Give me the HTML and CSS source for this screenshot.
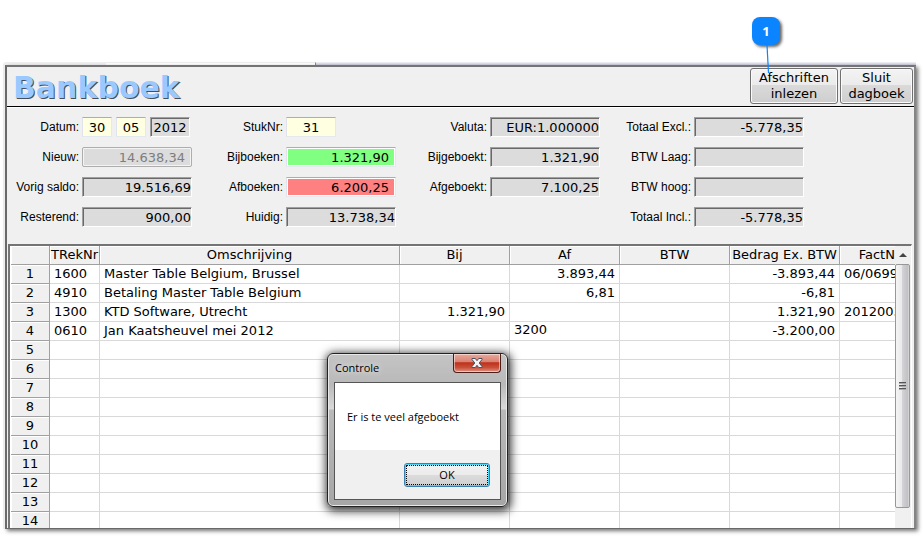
FILE: index.html
```html
<!DOCTYPE html>
<html lang="nl">
<head>
<meta charset="utf-8">
<title>Bankboek</title>
<link rel="stylesheet" href="styles.css">
</head>
<body>
<div class="page">
  <div class="backdrop"><span class="backdrop-tab"></span><span class="backdrop-rest"></span></div>
  <main class="window">
    <header class="titlebar">
      <h1>Bankboek</h1>
      <button class="tool import" type="button">Afschriften inlezen</button>
      <button class="tool close-book" type="button">Sluit dagboek</button>
    </header>

    <form class="summary">
      <div class="group">
        <div class="field">
          <label for="dag">Datum:</label>
          <div class="date">
            <input class="box edit" id="dag" value="30">
            <input class="box edit" aria-label="Maand" value="05">
            <input class="box year" aria-label="Jaar" value="2012" readonly>
          </div>
        </div>
        <div class="field"><label for="nieuw">Nieuw:</label><input class="box off" id="nieuw" value="14.638,34" disabled></div>
        <div class="field"><label for="vorig">Vorig saldo:</label><input class="box" id="vorig" value="19.516,69" readonly></div>
        <div class="field"><label for="rest">Resterend:</label><input class="box" id="rest" value="900,00" readonly></div>
      </div>
      <div class="group">
        <div class="field"><label for="stuk">StukNr:</label><div class="date"><input class="box edit piece" id="stuk" value="31"></div></div>
        <div class="field"><label for="bij">Bijboeken:</label><input class="box credit" id="bij" value="1.321,90"></div>
        <div class="field"><label for="af">Afboeken:</label><input class="box debit" id="af" value="6.200,25"></div>
        <div class="field"><label for="huidig">Huidig:</label><input class="box" id="huidig" value="13.738,34" readonly></div>
      </div>
      <div class="group">
        <div class="field"><label for="valuta">Valuta:</label><input class="box" id="valuta" value="EUR:1.000000" readonly></div>
        <div class="field"><label for="bijg">Bijgeboekt:</label><input class="box" id="bijg" value="1.321,90" readonly></div>
        <div class="field"><label for="afg">Afgeboekt:</label><input class="box" id="afg" value="7.100,25" readonly></div>
      </div>
      <div class="group">
        <div class="field"><label for="excl">Totaal Excl.:</label><input class="box" id="excl" value="-5.778,35" readonly></div>
        <div class="field"><label for="laag">BTW Laag:</label><input class="box" id="laag" value="" readonly></div>
        <div class="field"><label for="hoog">BTW hoog:</label><input class="box" id="hoog" value="" readonly></div>
        <div class="field"><label for="incl">Totaal Incl.:</label><input class="box" id="incl" value="-5.778,35" readonly></div>
      </div>
    </form>

    <section class="ledger">
      <div class="sheet">
        <table>
          <colgroup><col class="c-no"><col class="c-rek"><col><col class="c-amt"><col class="c-amt"><col class="c-amt"><col class="c-amt"><col class="c-fact"></colgroup>
          <thead>
            <tr><th></th><th>TRekNr</th><th>Omschrijving</th><th>Bij</th><th>Af</th><th>BTW</th><th>Bedrag Ex. BTW</th><th>FactNr</th></tr>
          </thead>
          <tbody>
            <tr><th>1</th><td>1600</td><td>Master Table Belgium, Brussel</td><td></td><td class="num">3.893,44</td><td></td><td class="num">-3.893,44</td><td>06/0699</td></tr>
            <tr><th>2</th><td>4910</td><td>Betaling Master Table Belgium</td><td></td><td class="num">6,81</td><td></td><td class="num">-6,81</td><td></td></tr>
            <tr><th>3</th><td>1300</td><td>KTD Software, Utrecht</td><td class="num">1.321,90</td><td></td><td></td><td class="num">1.321,90</td><td>2012003</td></tr>
            <tr><th>4</th><td>0610</td><td>Jan Kaatsheuvel mei 2012</td><td></td><td><input class="cell-edit" aria-label="Af" value="3200"></td><td></td><td class="num">-3.200,00</td><td></td></tr>
            <tr><th>5</th><td></td><td></td><td></td><td></td><td></td><td></td><td></td></tr>
            <tr><th>6</th><td></td><td></td><td></td><td></td><td></td><td></td><td></td></tr>
            <tr><th>7</th><td></td><td></td><td></td><td></td><td></td><td></td><td></td></tr>
            <tr><th>8</th><td></td><td></td><td></td><td></td><td></td><td></td><td></td></tr>
            <tr><th>9</th><td></td><td></td><td></td><td></td><td></td><td></td><td></td></tr>
            <tr><th>10</th><td></td><td></td><td></td><td></td><td></td><td></td><td></td></tr>
            <tr><th>11</th><td></td><td></td><td></td><td></td><td></td><td></td><td></td></tr>
            <tr><th>12</th><td></td><td></td><td></td><td></td><td></td><td></td><td></td></tr>
            <tr><th>13</th><td></td><td></td><td></td><td></td><td></td><td></td><td></td></tr>
            <tr><th>14</th><td></td><td></td><td></td><td></td><td></td><td></td><td></td></tr>
          </tbody>
        </table>
      </div>
      <div class="scrollbar">
        <button class="scroll-up" type="button" aria-label="Omhoog"><svg width="8" height="4" viewBox="0 0 8 4"><path d="M0 4L4 0L8 4Z" fill="#444"/></svg></button>
        <div class="thumb"><svg width="8" height="9" viewBox="0 0 8 9"><path d="M0 .5H7M0 3.5H7M0 6.5H7" stroke="#555"/><path d="M0 1.5H7M0 4.5H7M0 7.5H7" stroke="#aaa"/></svg></div>
      </div>
    </section>
  </main>

  <div class="callout">
    <span class="callout-badge">1</span>
    <svg class="callout-line" width="28" height="28" viewBox="0 0 28 28"><path d="M15 0L16.500 28" stroke="#0a84ff" stroke-width="1.200"/></svg>
  </div>

  <div class="dialog" role="dialog" aria-labelledby="dlg-title">
    <div class="dialog-head">
      <span id="dlg-title">Controle</span>
      <button class="dialog-close" type="button" aria-label="Sluiten"><svg width="12" height="10" viewBox="0 0 12 10"><path d="M1 .5H4.3L6 2.7L7.7 .5H11V1.5L8.2 5L11 8.5V9.5H7.7L6 7.3L4.3 9.5H1V8.5L3.8 5L1 1.5Z" fill="#f4f4f4" stroke="#4a5260"/></svg></button>
    </div>
    <div class="dialog-body">
      <p>Er is te veel afgeboekt</p>
      <div class="dialog-actions"><button class="ok" type="button">OK</button></div>
    </div>
  </div>
</div>
</body>
</html>
```
FILE: styles.css
```css
* { box-sizing: border-box; }

body {
  margin: 0;
  background: #fff;
  color: #000;
  font: 13px/16px "DejaVu Sans", Verdana, sans-serif;
}

button, input { font: inherit; color: inherit; margin: 0; }

.page {
  position: relative;
  display: flex;
  flex-direction: column;
  height: 100vh;
  padding: 62px 7px 7px 3px;
  overflow: hidden;
}

/* Sliver of the parent window showing above the journal */
.backdrop {
  display: flex;
  flex: none;
  height: 3px;
  padding-left: 103px;
  background: #f0f0f0;
  border-top-left-radius: 3px;
}
.backdrop-tab { width: 210px; background: #fff; border-right: 1px solid #888; border-top: 1px solid #eee; }
.backdrop-rest { flex: 1; background: linear-gradient(#f4f5f9, #c9ccdb); }

.window {
  flex: 1;
  min-height: 0;
  display: flex;
  flex-direction: column;
  margin-left: 2px;
  background: #f0f0f0;
  border: 2px solid #696969;
  border-top-color: #747474;
  border-right-color: #858585;
  border-bottom: 1px solid #696969;
  box-shadow: -2px 0 0 #ececec, 2px 2px 4px rgba(0, 0, 0, .55);
}

.titlebar {
  display: flex;
  flex: none;
  gap: 2px;
  height: 40px;
  padding: 1px 1px 2px 6px;
  border-bottom: 1px solid #000;
}
h1 {
  flex: 1;
  margin: 0;
  font-size: 30px;
  line-height: 40px;
  color: #99c9ff;
  text-shadow: 1px 1px 0 #46505c;
}
.tool {
  padding: 0 4px;
  border: 1px solid #707070;
  border-radius: 3px;
  background: linear-gradient(#f3f3f3, #ebebeb 46%, #dadada 47%, #cecece);
  box-shadow: inset 0 0 0 1px #fafafa;
  line-height: 16px;
}
.import { width: 88px; }
.close-book { width: 73px; }

.summary {
  display: flex;
  flex: none;
  gap: 19px;
  padding: 9px 0 17px;
  border-top: 1px solid #fff;
}
.group { display: flex; flex-direction: column; gap: 10px; width: 185px; }
.field { display: flex; align-items: center; gap: 3px; height: 20px; }
.field label {
  flex: 1;
  text-align: right;
  white-space: nowrap;
  font: 12px/20px "Liberation Sans", Arial, sans-serif;
}
.box {
  width: 110px;
  height: 20px;
  padding: 1px 0 0;
  text-align: right;
  background: #dcdcdc;
  border: 1px solid;
  border-color: #a0a0a0 #fff #fff #a0a0a0;
  box-shadow: inset 1px 1px 0 #696969;
  border-radius: 0;
  outline: 0;
}
.date { display: flex; gap: 4px; width: 110px; }
.edit {
  width: 30px;
  text-align: center;
  background: #ffffe1;
  border-color: #abadb3 #e3e9ef #e3e9ef #e2e3ea;
  box-shadow: none;
}
.year { width: 40px; text-align: center; }
.piece { width: 50px; }
.off {
  padding-right: 6px;
  color: #7d7d7d;
  border-color: #adadad;
  border-radius: 2px;
  box-shadow: inset 0 0 0 1px #f4f4f4;
}
.credit, .debit {
  padding-right: 6px;
  border-color: #abadb3 #e3e9ef #e3e9ef #e2e3ea;
  box-shadow: inset 0 0 0 1px #fff;
}
.credit { background: #80ff80; }
.debit { background: #ff8080; }

.ledger {
  display: flex;
  flex: 1;
  min-height: 0;
  margin: 0 2px 0 1px;
  border: solid;
  border-width: 2px 1px 0 2px;
  border-color: #747474 #fff #fff #747474;
  background: #fff;
}
.sheet { flex: 1; min-width: 0; overflow: hidden; padding-left: 1px; }
table {
  width: calc(100% + 25px);
  table-layout: fixed;
  border-collapse: separate;
  border-spacing: 0;
}
.c-no { width: 39px; }
.c-rek { width: 50px; }
.c-amt { width: 110px; }
.c-fact { width: 80px; }
th, td {
  height: 19px;
  padding: 0 4px;
  line-height: 18px;
  white-space: nowrap;
  overflow: hidden;
  border: solid #d9d9d9;
  border-width: 0 1px 1px 0;
  text-align: left;
}
th {
  padding: 0;
  font-weight: normal;
  text-align: center;
  background: #f0f0f0;
  border-color: #a0a0a0;
  box-shadow: inset 1px 1px 0 #fff;
}
.num { text-align: right; }
.cell-edit {
  display: block;
  width: 100%;
  height: 18px;
  padding: 0 0 2px;
  border: 0;
  outline: 0;
  background: #fff;
}

.scrollbar {
  display: flex;
  flex-direction: column;
  flex: none;
  width: 16px;
  padding-bottom: 20px;
  background: #f0f0f0;
}
.scroll-up {
  display: grid;
  place-items: center;
  height: 18px;
  padding: 0;
  border: 0;
  background: #f0f0f0;
}
.thumb {
  flex: 1;
  display: grid;
  place-items: center;
  margin: 0 1px 0 0;
  border: 1px solid #979797;
  border-radius: 2px;
  background: linear-gradient(90deg, #f5f5f5, #e9e9eb 45%, #d3d3d6 50%, #c0c0c5 90%, #dedee0);
}

.callout { position: absolute; top: 17px; right: 143px; width: 28px; }
.callout-badge {
  display: block;
  height: 28px;
  border-radius: 8px;
  background: #0a84ff;
  box-shadow: 2px 2px 3px rgba(0, 0, 0, .6);
  color: #fff;
  font: bold 13px/28px "Open Sans", sans-serif;
  text-align: center;
}
.callout-line { display: block; }

.dialog {
  position: absolute;
  left: 327px;
  top: 353px;
  width: 181px;
  padding: 0 6px 6px;
  border: 1px solid #222;
  border-radius: 6px;
  background: linear-gradient(#c4c4c4, #b9b9b9 20%, #d9d9d9 36%, #b9b9b9 37%, #a6a6a6);
  box-shadow: inset 0 0 0 1px #e8e8e8, 1px 2px 10px 2px rgba(0, 0, 0, .8);
  font: 11px/16px "Open Sans", "Segoe UI", sans-serif;
}
.dialog-head { display: flex; justify-content: space-between; height: 28px; }
.dialog-head span { padding: 6px 1px; text-shadow: 0 0 6px #fff; }
.dialog-close {
  display: grid;
  place-items: center;
  width: 48px;
  height: 19px;
  padding: 0;
  border: 1px solid #4c1e1a;
  border-top: 0;
  border-radius: 0 0 4px 4px;
  background: linear-gradient(#e9a99e, #d98070 45%, #bf3018 48%, #c8503a 75%, #df9484);
  box-shadow: inset 0 0 0 1px rgba(255, 255, 255, .5);
}
.dialog-body { border: 1px solid #555; background: #f0f0f0; }
.dialog-body p { margin: 0; padding: 26px 12px 25px; background: #fff; }
.dialog-actions { display: flex; justify-content: flex-end; padding: 13px 10px 12px; }
.ok {
  width: 86px;
  height: 24px;
  padding: 0;
  border: 1px solid #3c7fb1;
  border-radius: 3px;
  background: linear-gradient(#f2f2f2, #ebebeb 48%, #dcdcdc 50%, #cfcfcf);
  box-shadow: inset 0 0 0 1px #46d8fb;
  outline: 1px dotted #000;
  outline-offset: -3px;
}
```
